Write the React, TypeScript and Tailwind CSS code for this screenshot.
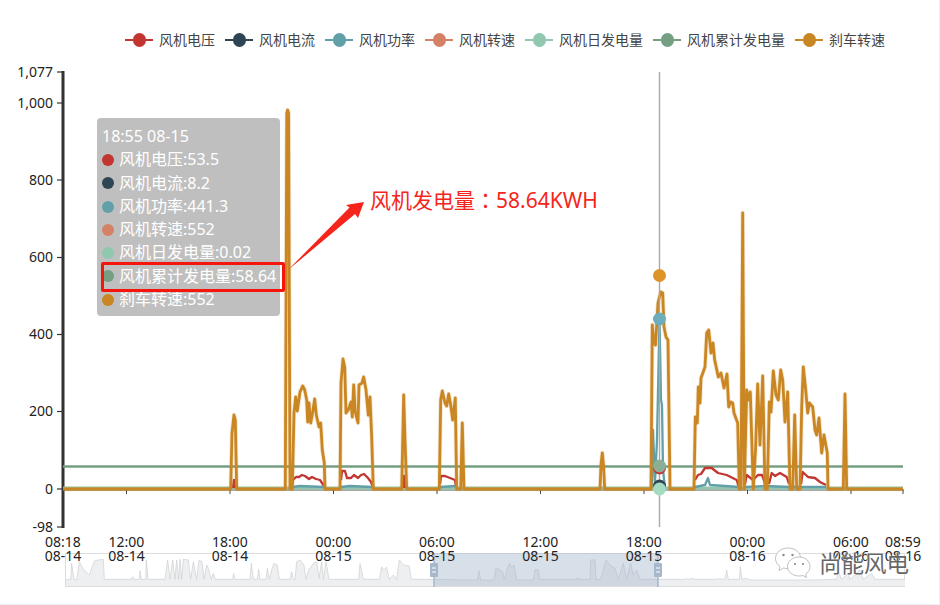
const FONT = '"Noto Sans", "Noto Sans CJK SC", sans-serif';

const legend = [
  { name: "风机电压", color: "#c23531" },
  { name: "风机电流", color: "#2f4554" },
  { name: "风机功率", color: "#61a0a8" },
  { name: "风机转速", color: "#d48265" },
  { name: "风机日发电量", color: "#91c7ae" },
  { name: "风机累计发电量", color: "#749f83" },
  { name: "刹车转速", color: "#ca8622" },
];

const tipValues = ["53.5", "8.2", "441.3", "552", "0.02", "58.64", "552"];

const yTicks: [string, number][] = [
  ["1,077", 72],
  ["1,000", 103],
  ["800", 180],
  ["600", 257.5],
  ["400", 334.5],
  ["200", 411.5],
  ["0", 489],
  ["-98", 527],
];

const xTicks: [string, string, number][] = [
  ["08:18", "08-14", 63],
  ["12:00", "08-14", 126.5],
  ["18:00", "08-14", 230],
  ["00:00", "08-15", 333.5],
  ["06:00", "08-15", 437],
  ["12:00", "08-15", 540.5],
  ["18:00", "08-15", 644],
  ["00:00", "08-16", 747.5],
  ["06:00", "08-16", 851],
  ["08:59", "08-16", 903],
];

const brake: [number, number][] = [
  [63, 489], [230.7, 489], [232, 433], [234, 415], [235.3, 420], [236.7, 489],
  [285.3, 489], [286.8, 113], [287.6, 110], [288.6, 113], [290, 489],
  [292.3, 489], [294, 413], [295.7, 397], [297.3, 411], [300, 392], [302.7, 386], [304.7, 390], [306.7, 400], [307.7, 422], [309, 403], [310.7, 423], [312.7, 412], [314.7, 399], [316.3, 415], [319, 427], [320.7, 423], [322.3, 450], [324.3, 463], [325, 489],
  [340, 489], [341, 383], [343, 359], [344.7, 367], [346, 413], [348.3, 410], [351, 402], [352.3, 417], [353.7, 385], [355.3, 412], [358, 423], [359, 385], [362, 383], [363.7, 377], [366, 390], [368.3, 415], [370, 397], [371.7, 437], [373.3, 489],
  [401.7, 489], [403.7, 395], [405, 440], [406.7, 489],
  [439.3, 489], [440.7, 400], [442.3, 391], [445, 403], [446.7, 406], [448.7, 394], [450.7, 405], [452.7, 420], [455.3, 398], [456.7, 489],
  [460.7, 489], [462.3, 423], [464, 489],
  [600, 489], [601, 465], [602.3, 453], [603.5, 465], [604.7, 489],
  [651, 489], [652.3, 325], [654, 342], [655.5, 345], [658, 303], [660.7, 292], [662.7, 293], [664, 327], [666, 337], [668, 340], [670, 489],
  [694, 489], [695.3, 417], [697.3, 423], [698.3, 387], [700, 403], [701, 378], [705, 367], [706.7, 333], [708.7, 330], [711, 353], [713, 343], [714.7, 360], [718.3, 377], [721, 373], [724, 388], [727, 374], [728.7, 407], [730.7, 402], [732.7, 403], [734, 413], [737.7, 423], [739.3, 489],
  [741, 489], [742.7, 213], [744.3, 489], [746.7, 390], [748.3, 400], [750.3, 392], [753.3, 489], [755.5, 450], [757.7, 384], [760, 445], [762.7, 376], [765, 489], [767.3, 489], [769.3, 402], [771, 412], [773.3, 371], [776, 395], [778.3, 400], [780.7, 370], [782.7, 380], [785, 422], [787.7, 392], [790, 489], [792.7, 489], [794.7, 415], [796.7, 489], [800, 489], [801.7, 407], [803.3, 367], [805.7, 390], [807.7, 413], [809.3, 403], [812.7, 407], [815, 430], [816.7, 435], [819, 418], [821.7, 453], [824, 435], [827.3, 453], [828, 489],
  [843.3, 489], [845, 394], [846.7, 489], [903, 489],
];

const voltage: [number, number][][] = [
  [[233, 488], [234, 480], [235, 488]],
  [[292, 486], [293, 480], [296, 477], [299, 477], [302, 475], [305, 476], [309, 479], [312, 477], [316, 479], [320, 480], [324, 486]],
  [[341, 480], [342, 471], [345, 471], [347, 478], [351, 478], [354, 475], [358, 478], [361, 475], [364, 474], [368, 478], [371, 482], [373, 488]],
  [[403, 488], [404, 476], [405, 488]],
  [[440, 484], [441, 476], [445, 476], [450, 478], [455, 480], [456, 487]],
  [[695, 480], [698, 475], [701, 474], [705, 468], [711.7, 468], [718, 473], [726.7, 475], [736.7, 480], [739, 488]],
  [[745, 484], [746.7, 475], [753, 480], [758, 475], [762, 475], [766, 486]],
  [[769, 484], [771.7, 473], [775, 476], [780, 473], [786.7, 477], [789, 484]],
  [[801, 484], [802.7, 472], [808, 477], [815, 478], [820, 482], [826, 485]],
];

const power: [number, number][][] = [
  [[292, 487], [300, 486], [324, 487]],
  [[341, 487], [350, 486], [372, 487]],
  [[440, 487], [455, 486]],
  [[652, 488], [653, 430], [655, 482], [657, 440], [659.5, 319], [661, 400], [662, 405], [663, 470], [665, 488]],
  [[695, 487], [705, 485], [708, 478], [710, 485], [725, 486], [739, 487]],
  [[745, 487], [765, 486], [790, 487], [826, 487]],
];

// overview strip, traced as [u, v] from a 3x crop
const stripLeft: [number, number][] = [
  [198, 300], [205, 297], [212, 300], [215, 250], [222, 298], [230, 300], [238, 245], [247, 262], [252, 270], [268, 285], [283, 243], [295, 240], [310, 238], [313, 298], [395, 298], [398, 290], [402, 298], [418, 298], [420, 272], [424, 298], [437, 298], [439, 240], [444, 298], [495, 298], [503, 240], [510, 298], [518, 240], [525, 298], [530, 240], [536, 298], [540, 238], [545, 298], [550, 238], [565, 240], [572, 298], [580, 245], [590, 298], [597, 240], [606, 245], [612, 298], [620, 255], [625, 265], [634, 298], [640, 280], [646, 298], [698, 298], [701, 280], [704, 298], [750, 298], [754, 250], [760, 298], [772, 298], [776, 268], [780, 298], [798, 298], [802, 265], [808, 298], [815, 270], [822, 250], [832, 255], [838, 298], [870, 298], [875, 275], [880, 298], [885, 300], [890, 245], [900, 240], [912, 255], [918, 298], [926, 270], [940, 250], [950, 245], [957, 295], [965, 245], [970, 298], [978, 245], [987, 298], [1076, 298], [1080, 250], [1090, 298], [1138, 298], [1145, 260], [1150, 270], [1160, 262], [1168, 298], [1180, 285], [1190, 298], [1198, 240], [1210, 255], [1228, 258], [1234, 298], [1300, 298], [1410, 300],
];
const stripRight: [number, number][] = [
  [22, 300], [27, 272], [32, 300], [72, 300], [78, 265], [90, 270], [98, 275], [103, 300], [112, 265], [118, 250], [125, 262], [132, 255], [140, 300], [190, 300], [195, 268], [205, 270], [210, 298], [318, 298], [322, 293], [326, 298], [360, 298], [362, 240], [375, 240], [378, 298], [392, 298], [408, 240], [420, 255], [435, 265], [445, 298], [460, 250], [470, 298], [482, 250], [490, 285], [500, 270], [510, 298], [650, 298], [652, 295], [656, 298], [670, 295], [675, 298], [740, 298], [745, 296], [765, 298], [770, 270], [775, 298], [808, 298], [811, 260], [816, 298], [830, 295], [840, 300], [1030, 300], [1100, 298], [1105, 275], [1115, 298], [1135, 280], [1140, 298], [1170, 270], [1180, 298], [1205, 280], [1215, 298], [1305, 298],
];

const pts = (list: [number, number][]) => list.map((p) => p.join(",")).join(" ");

const stripPts = [
  ...stripLeft.map(([u, v]) => [u / 3, 480 + v / 3] as [number, number]),
  ...stripRight.map(([u, v]) => [470 + u / 3, 480 + v / 3] as [number, number]),
];

function Chart() {
  return (
    <svg width="940" height="543" viewBox="0 60 940 543" className="block" style={{ fontFamily: FONT }}>
      {/* y axis */}
      <line x1="63" y1="71" x2="63" y2="528" stroke="#333333" strokeWidth="3" />
      {yTicks.map(([label, y]) => (
        <g key={label}>
          <line x1="57" y1={y} x2="63" y2={y} stroke="#333333" strokeWidth="1.2" />
          <text x="53" y={y + 4.5} textAnchor="end" fontSize="14" fill="#222222">{label}</text>
        </g>
      ))}

      {/* x axis */}
      <line x1="63" y1="490" x2="904" y2="490" stroke="#555555" strokeWidth="1" />
      {xTicks.slice(1).map(([a, b, x]) => (
        <line key={a + b} x1={x} y1="490" x2={x} y2="494" stroke="#444444" strokeWidth="1" />
      ))}

      {/* overview strip */}
      <rect x="65.5" y="553.5" width="839" height="33" fill="#ffffff" stroke="#dddddd" />
      <polygon points={`${pts(stripPts)} 905,580 905,586 66,586 66,580`} fill="#eeeff0" />
      <polyline points={pts(stripPts)} fill="none" stroke="#cdd0d3" strokeWidth="0.7" />
      <rect x="434" y="553" width="224" height="33" fill="#a7b7cc" fillOpacity="0.45" />
      <line x1="434" y1="553" x2="434" y2="587" stroke="#a7b7cc" strokeWidth="1.5" />
      <line x1="658" y1="553" x2="658" y2="587" stroke="#a7b7cc" strokeWidth="1.5" />
      {[434, 658].map((x) => (
        <g key={x}>
          <rect x={x - 4} y="563" width="8" height="14" rx="1" fill="#a7b7cc" />
          <line x1={x - 2} y1="568" x2={x + 2} y2="568" stroke="#ffffff" />
          <line x1={x - 2} y1="572" x2={x + 2} y2="572" stroke="#ffffff" />
        </g>
      ))}

      {xTicks.map(([a, b, x]) => (
        <text key={a + b} x={x} textAnchor="middle" fontSize="14" fill="#222222">
          <tspan x={x} y="547">{a}</tspan>
          <tspan x={x} y="561">{b}</tspan>
        </text>
      ))}

      {/* series */}
      <line x1="63" y1="488" x2="903" y2="488" stroke="#91c7ae" strokeWidth="3" />
      <line x1="63" y1="466.5" x2="903" y2="466.5" stroke="#749f83" strokeWidth="2.4" />
      {voltage.map((s, i) => (
        <polyline key={i} points={pts(s)} fill="none" stroke="#c23531" strokeWidth="2.3" strokeLinejoin="round" />
      ))}
      {power.map((s, i) => (
        <polyline key={i} points={pts(s)} fill="none" stroke="#61a0a8" strokeWidth="2.3" strokeLinejoin="round" />
      ))}
      <polyline points={pts(brake)} fill="none" stroke="#ca8622" strokeOpacity="0.2" strokeWidth="4.5" strokeLinejoin="round" />
      <polyline points={pts(brake)} fill="none" stroke="#ca8622" strokeWidth="2.8" strokeLinejoin="round" />

      {/* pointer */}
      <line x1="659.5" y1="72" x2="659.5" y2="527" stroke="#aaaaaa" strokeWidth="1.4" />
      <circle cx="659.5" cy="275.5" r="6.5" fill="#dd9428" />
      <circle cx="659.5" cy="319" r="6.5" fill="#6caebb" />
      <circle cx="659.5" cy="468" r="6.5" fill="#c23531" />
      <circle cx="659.5" cy="466" r="6.5" fill="#8aaf96" />
      <circle cx="659.5" cy="486" r="6.5" fill="#2f4554" />
      <circle cx="659.5" cy="489" r="6.5" fill="#a3dcc0" />

      {/* callout arrow */}
      <polygon points="288,270 349.5,207.5 346,205 364,202 358,218 355,214" fill="#f5251c" />

      {/* wechat mark */}
      <g fill="#ffffff" stroke="#b0b0b0" strokeWidth="0.8">
        <path d="M788 548c-7 0-12.500 4.500-12.500 10.500 0 3.500 1.800 6 4.500 8l-1 4 4.500-2.500c1.500.4 3 .6 4.500.6 7 0 12.500-4.800 12.500-10.600S795 548 788 548z" />
        <path d="M799 557c-6.500 0-11.500 4.200-11.500 9.500s5 9.500 11.500 9.500c1.300 0 2.600-.2 3.800-.5l3.700 2-.9-3.300c2.600-1.800 4.400-4.500 4.400-7.700 0-5.300-5-9.500-10.500-9.500z" />
      </g>
      <g fill="#8a8a8a">
        <circle cx="783.500" cy="555" r="1.200" />
        <circle cx="792.500" cy="555" r="1.200" />
        <circle cx="795" cy="564" r="1.100" />
        <circle cx="803" cy="564" r="1.100" />
      </g>
    </svg>
  );
}

export default function App() {
  return (
    <div className="relative w-[940px] h-[605px] overflow-hidden bg-white border-r border-b border-[#eef1f6]" style={{ fontFamily: FONT }}>
      <div className="flex h-[60px] pl-[125px] pt-[29px] gap-[10px] text-[14px] leading-[22px] text-[#444444]">
        {legend.map((item) => (
          <div key={item.name} className="flex h-[22px] items-center gap-[6px]">
            <div className="flex w-[28px] items-center">
              <div className="h-[2px] flex-1" style={{ backgroundColor: item.color }} />
              <div className="h-[14px] w-[13px] rounded-full" style={{ backgroundColor: item.color }} />
              <div className="h-[2px] flex-1" style={{ backgroundColor: item.color }} />
            </div>
            <span>{item.name}</span>
          </div>
        ))}
      </div>

      <Chart />

      {/* tooltip */}
      <div className="absolute left-[97px] top-[118px] w-[183px] h-[198px] rounded bg-[#bfbfbf] px-[5px] pt-[7px] text-[16px] leading-[23.300px] text-white">
        <div>18:55 08-15</div>
        {legend.map((item, i) => (
          <div key={item.name} className="flex items-center gap-[5px] whitespace-nowrap">
            <span className="h-[12px] w-[12px] shrink-0 rounded-full" style={{ backgroundColor: item.color }} />
            <span>{item.name}:{tipValues[i]}</span>
          </div>
        ))}
      </div>
      <div className="absolute left-[101px] top-[262px] h-[30px] w-[184px] rounded-[2px] border-[3px] border-[#f5150c]" />

      <div className="absolute left-[370px] top-[184px] text-[21px] leading-[30px] text-[#f5251c] whitespace-nowrap">
        风机发电量<span className="font-['Noto_Sans_CJK_TC']">：</span>58.64KWH
      </div>

      <div className="absolute left-[819px] top-[549px] text-[22.500px] leading-[30px] text-[#666666] whitespace-nowrap [text-shadow:0_0_2px_#ffffff,0_0_1px_#ffffff]">
        尚能风电
      </div>
    </div>
  );
}
